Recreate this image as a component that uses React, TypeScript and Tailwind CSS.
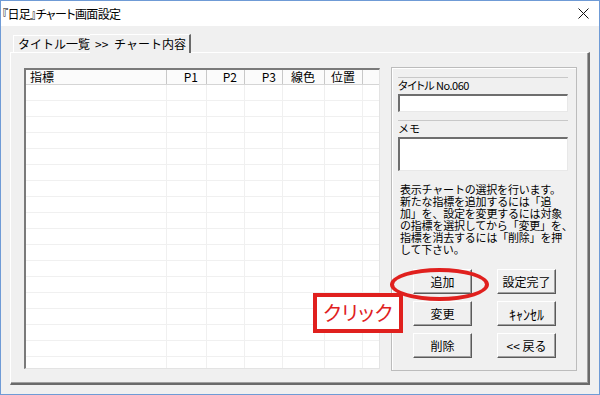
import React from "react";

const jp = "[font-family:'Noto_Sans_CJK_JP','Liberation_Sans',sans-serif]";

const cols = [
  { label: "指標", w: "w-[141px]", align: "text-left pl-[4px]" },
  { label: "P1", w: "w-[40px]", align: "text-right pr-[8px]" },
  { label: "P2", w: "w-[38px]", align: "text-right pr-[7px]" },
  { label: "P3", w: "w-[38px]", align: "text-right pr-[6px]" },
  { label: "線色", w: "w-[42px]", align: "text-left pl-[8px]" },
  { label: "位置", w: "w-[38px]", align: "text-left pl-[6px]" },
];

const rows = Array.from({ length: 18 }, (_, i) => i);

const helpLines = [
  "表示チャートの選択を行います。",
  "新たな指標を追加するには「追",
  "加」を、設定を変更するには対象",
  "の指標を選択してから「変更」を、",
  "指標を消去するには「削除」を押",
  "して下さい。",
];

function WinButton({ children }: { children: React.ReactNode }) {
  return (
    <button
      type="button"
      className="w-[59px] h-[25px] bg-[#f0f0f0] border-t border-l border-white border-r border-b border-r-[#5a5a5a] border-b-[#5a5a5a] shadow-[inset_-1px_-1px_0_#a0a0a0] text-[12px] text-black leading-none flex items-center justify-center"
    >
      {children}
    </button>
  );
}

function ListTable() {
  return (
    <div className="w-[356px] h-[301px] bg-white border-t-2 border-l-2 border-t-[#7a7a7a] border-l-[#7a7a7a] border-r border-b border-r-[#e3e3e3] border-b-[#e3e3e3] overflow-hidden flex flex-col">
      {/* ヘッダー */}
      <div className="flex h-[15px] shrink-0 border-b border-[#d5d5d5] bg-[#fbfbfb]">
        {cols.map((c) => (
          <div
            key={c.label}
            className={`${c.w} ${c.align} shrink-0 border-r border-[#c8c8c8] text-[12px] leading-[14px] text-black`}
          >
            {c.label}
          </div>
        ))}
        <div className="flex-1" />
      </div>
      {/* 行 */}
      {rows.map((r) => (
        <div key={r} className="flex h-[16px] shrink-0 border-b border-[#f0f0f0]">
          {cols.map((c) => (
            <div key={c.label} className={`${c.w} shrink-0 border-r border-[#f0f0f0]`} />
          ))}
          <div className="flex-1" />
        </div>
      ))}
    </div>
  );
}

function SideBox() {
  return (
    <div className="w-[186px] h-[304px] border border-[#bcbcbc] shadow-[inset_1px_1px_0_#fff] px-[6px] pt-[9px] flex flex-col">
      <div className="w-[170px] h-[16px] border-t border-[#c8c8c8] text-[11px] leading-[14px] [font-feature-settings:'palt'] tracking-[-0.5px]">
        タイトル No.060
      </div>
      <div className="w-[170px] h-[18px] mt-[1px] bg-white border-t-2 border-l-2 border-t-[#6e6e6e] border-l-[#6e6e6e] border-r border-b border-r-[#e8e8e8] border-b-[#e8e8e8]" />
      <div className="w-[170px] h-[15px] mt-[8px] border-t border-[#c8c8c8] text-[11px] leading-[14px]">
        メモ
      </div>
      <div className="w-[170px] h-[34px] mt-[2px] bg-white border-t-2 border-l-2 border-t-[#6e6e6e] border-l-[#6e6e6e] border-r border-b border-r-[#e8e8e8] border-b-[#e8e8e8]" />
      <div className="mt-[12px] pl-[2px] w-[176px] text-[11px] leading-[12px] text-black tracking-[-0.2px] whitespace-nowrap">
        {helpLines.map((l) => (
          <div key={l}>{l}</div>
        ))}
      </div>
      <div className="mt-[14px] ml-[15px] grid grid-cols-[59px_59px] gap-x-[25px] gap-y-[7px]">
        <WinButton>追加</WinButton>
        <WinButton>設定完了</WinButton>
        <WinButton>変更</WinButton>
        <WinButton>
          <span className="text-[14px]">ｷｬﾝｾﾙ</span>
        </WinButton>
        <WinButton>削除</WinButton>
        <WinButton>&lt;&lt; 戻る</WinButton>
      </div>
    </div>
  );
}

export default function App() {
  return (
    <div className={`relative w-[600px] h-[395px] flex flex-col border border-[#6f9bd6] bg-white text-black ${jp}`}>
      {/* タイトルバー */}
      <div className="h-[25px] shrink-0 bg-white flex items-center justify-between pl-[1px] pr-[8px]">
        <span className="text-[12px] [font-feature-settings:'palt'] tracking-[-0.6px]">『日足』チャート画面設定</span>
        <svg width="11" height="11" viewBox="0 0 11 11" className="mr-[2px]">
          <path d="M0.5 0.5 L10.5 10.5 M10.5 0.5 L0.5 10.5" stroke="#111" strokeWidth="1" />
        </svg>
      </div>

      {/* 本体 */}
      <div className="flex-1 bg-[#f0f0f0] px-[9px] pt-[7px] pb-[9px] flex flex-col">
        {/* タブ */}
        <div className="h-[19px] shrink-0 flex items-end pl-[3px]">
          <div className="w-[77px] h-[17px] border-t border-l border-white text-[12px] leading-[16px] pl-[4px]">
            タイトル一覧
          </div>
          <div className="w-[101px] h-[19px] border-t border-white border-r-2 border-r-[#6a6a6a] text-[12px] leading-[17px] pl-[5px] -mb-[1px] bg-[#f0f0f0] relative z-10 flex">
            <span className="w-[19px]">&gt;&gt;</span>
            <span>チャート内容</span>
          </div>
        </div>
        <div className="flex-1 border-t border-l border-white border-r-2 border-b-2 border-r-[#6a6a6a] border-b-[#6a6a6a] shadow-[inset_-1px_-1px_0_#a0a0a0] pl-[13px] pt-[15px] flex gap-[11px]">
          <ListTable />
          <div className="-mt-[1px]">
            <SideBox />
          </div>
        </div>
      </div>

      {/* 注釈: 赤い楕円 */}
      <div className="absolute left-[389px] top-[267px] w-[99px] h-[33px] rounded-[50%] border-[4px] border-[#e0201e] pointer-events-none" />

      {/* 注釈: クリック */}
      <div className="absolute left-[312px] top-[292px] w-[90px] h-[40px] border-[4px] border-[#e0201e] bg-white flex items-center justify-center">
        <span className="text-[20px] leading-none text-[#e0201e] [font-feature-settings:'palt'] tracking-[0.5px]">クリック</span>
      </div>
    </div>
  );
}
